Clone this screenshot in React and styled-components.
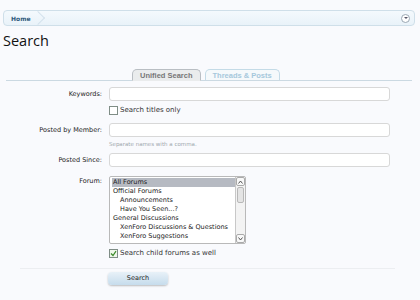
import React from "react";
import styled, { createGlobalStyle } from "styled-components";

const Global = createGlobalStyle`
  html, body { margin: 0; padding: 0; background: #f9fafd; }
  body { font-family: "DejaVu Sans", Verdana, sans-serif; color: #222; }
`;

const Page = styled.div`
  width: 420px;
  height: 300px;
  padding: 10px 5px 0 3px;
  box-sizing: border-box;
  overflow: hidden;
`;

const Crumbs = styled.div`
  height: 14px;
  border: 1px solid #cfdfe9;
  border-radius: 4px;
  background: linear-gradient(#f4f9fd, #e9f2f9);
  display: flex;
  align-items: center;
  justify-content: space-between;
  padding-right: 4px;
`;

const Crumb = styled.span`
  position: relative;
  height: 14px;
  display: flex;
  align-items: center;
  padding: 0 10px 0 7px;
  font-size: 6px;
  font-weight: bold;
  color: #2f5a7c;
  &::after {
    content: "";
    position: absolute;
    right: -3px;
    top: 2px;
    width: 9px;
    height: 9px;
    border-top: 1px solid #d4e2ec;
    border-right: 1px solid #d4e2ec;
    transform: rotate(45deg);
  }
`;

const Jump = styled.span`
  width: 7px;
  height: 7px;
  border: 1px solid #9aa7b3;
  border-radius: 50%;
  background: #fff;
  display: flex;
  align-items: center;
  justify-content: center;
  &::after {
    content: "";
    border-left: 2px solid transparent;
    border-right: 2px solid transparent;
    border-top: 2px solid #556;
  }
`;

const Title = styled.h1`
  margin: 5px 0 0 0;
  font-family: "Open Sans", sans-serif;
  font-weight: normal;
  font-size: 14.5px;
  line-height: 20px;
  color: #111;
`;

const TabBar = styled.div`
  margin: 18px 3px 0 3px;
  border-bottom: 1px solid #cbd9e2;
  display: flex;
  gap: 4px;
  padding-left: 126px;
`;

const Tab = styled.div`
  height: 10px;
  padding: 0 7px;
  border: 1px solid ${p => (p.$active ? "#b9bec3" : "#c4dbe7")};
  border-bottom: none;
  border-radius: 5px 5px 0 0;
  background: ${p => (p.$active ? "#eaeced" : "#f5f9fb")};
  color: ${p => (p.$active ? "#777" : "#a6c8dc")};
  font-family: "Liberation Sans", Arial, sans-serif;
  font-weight: bold;
  font-size: 7.5px;
  line-height: 11px;
  margin-bottom: -1px;
  ${p => p.$active && "border-bottom: 1px solid #eaeced;"}
`;

const Form = styled.div`
  display: grid;
  grid-template-columns: 99px 281px;
  column-gap: 7px;
  align-items: start;
  margin-top: 6px;
`;

const Label = styled.div`
  text-align: right;
  font-size: 6.5px;
  line-height: 14px;
  color: #222;
  margin-top: ${p => p.$mt || 0}px;
`;

const Field = styled.div`
  display: flex;
  flex-direction: column;
  margin-top: ${p => p.$mt || 0}px;
`;

const Input = styled.div`
  height: 12px;
  border: 1px solid #d8d8d8;
  border-radius: 3px;
  background: #fff;
`;

const Check = styled.label`
  display: flex;
  align-items: center;
  gap: 2px;
  margin-top: ${p => p.$mt || 4}px;
  font-size: 7px;
  color: #333;
  line-height: 10px;
`;

const Box = styled.span`
  width: 7px;
  height: 7px;
  border: 1px solid #7f8d86;
  background: ${p => (p.$on ? "#eef7ea" : "#fff")};
  display: flex;
  align-items: center;
  justify-content: center;
`;

const Hint = styled.div`
  font-size: 5.5px;
  color: #a0a8ae;
  margin-top: 3px;
  line-height: 8px;
`;

const Select = styled.div`
  width: 137px;
  height: 68px;
  border: 1px solid #b9b9b9;
  border-radius: 2px;
  background: #fff;
  display: flex;
  box-sizing: border-box;
`;

const Options = styled.div`
  flex: 1;
  padding: 1px 0 0 2px;
`;

const Option = styled.div`
  font-size: 6.5px;
  line-height: 9px;
  height: 9px;
  padding-left: ${p => 1 + p.$depth * 7}px;
  background: ${p => (p.$sel ? "#b6bac2" : "transparent")};
  color: #222;
  white-space: nowrap;
`;

const Scroll = styled.div`
  width: 9px;
  border-left: 1px solid #c8c8c8;
  display: flex;
  flex-direction: column;
  background: #f3f3f3;
`;

const ScrollBtn = styled.div`
  height: 9px;
  border: 1px solid #aaa;
  border-radius: 2px;
  background: #f8f8f8;
  display: flex;
  align-items: center;
  justify-content: center;
  box-sizing: border-box;
`;

const Track = styled.div`
  flex: 1;
  padding: 1px;
`;

const Thumb = styled.div`
  height: 14px;
  border: 1px solid #b8b8b8;
  border-radius: 2px;
  background: #e4e4e4;
`;

const Divider = styled.div`
  margin: 10px 20px 0 17px;
  border-top: 1px solid #eceef1;
`;

const Actions = styled.div`
  padding: 3px 0 0 105px;
`;

const Button = styled.div`
  width: 60px;
  height: 13px;
  border-radius: 4px;
  background: linear-gradient(#e8f1f8, #c6dcec);
  box-shadow: 0 1px 2px rgba(0,0,0,0.25);
  text-align: center;
  font-size: 6.5px;
  line-height: 13px;
  color: #222;
`;

const Arrow = ({ up }) => (
  <svg width="5" height="4" viewBox="0 0 5 4">
    <path d={up ? "M0.5 3.5 L2.5 1 L4.5 3.5" : "M0.5 0.5 L2.5 3 L4.5 0.5"} fill="none" stroke="#444" strokeWidth="0.9" />
  </svg>
);

const Tick = () => (
  <svg width="7" height="7" viewBox="0 0 7 7">
    <path d="M1 3.5 L3 5.5 L6 1.2" fill="none" stroke="#3a8a2a" strokeWidth="1.2" />
  </svg>
);

const forums = [
  ["All Forums", 0, true],
  ["Official Forums", 0],
  ["Announcements", 1],
  ["Have You Seen...?", 1],
  ["General Discussions", 0],
  ["XenForo Discussions & Questions", 1],
  ["XenForo Suggestions", 1],
];

export default function App() {
  return (
    <Page>
      <Global />
      <Crumbs>
        <Crumb>Home</Crumb>
        <Jump />
      </Crumbs>
      <Title>Search</Title>
      <TabBar>
        <Tab $active>Unified Search</Tab>
        <Tab>Threads &amp; Posts</Tab>
      </TabBar>
      <Form>
        <Label>Keywords:</Label>
        <Field>
          <Input />
          <Check><Box />Search titles only</Check>
        </Field>
        <Label $mt={8}>Posted by Member:</Label>
        <Field $mt={8}>
          <Input />
          <Hint>Separate names with a comma.</Hint>
        </Field>
        <Label $mt={5}>Posted Since:</Label>
        <Field $mt={5}>
          <Input />
        </Field>
        <Label $mt={7}>Forum:</Label>
        <Field $mt={9}>
          <Select>
            <Options>
              {forums.map(([t, d, s]) => (
                <Option key={t} $depth={d} $sel={s}>{t}</Option>
              ))}
            </Options>
            <Scroll>
              <ScrollBtn><Arrow up /></ScrollBtn>
              <Track><Thumb /></Track>
              <ScrollBtn><Arrow /></ScrollBtn>
            </Scroll>
          </Select>
          <Check $mt={4}><Box $on><Tick /></Box>Search child forums as well</Check>
        </Field>
      </Form>
      <Divider />
      <Actions>
        <Button>Search</Button>
      </Actions>
    </Page>
  );
}
